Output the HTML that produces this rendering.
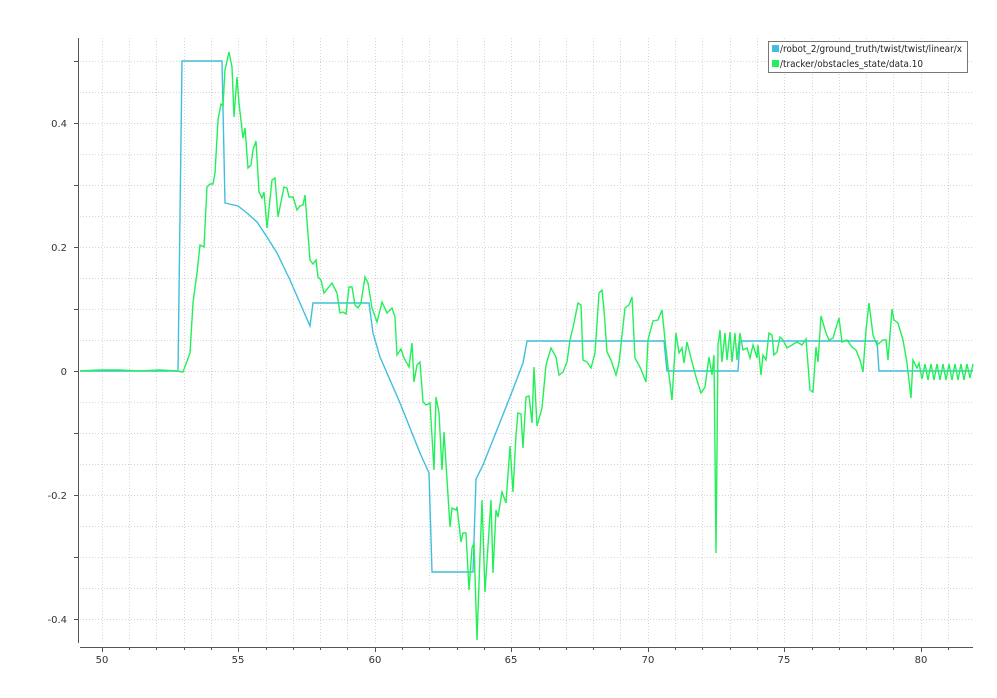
<!DOCTYPE html>
<html><head><meta charset="utf-8"><style>
html,body{margin:0;padding:0;background:#fff;width:997px;height:698px;overflow:hidden}
text{font-family:"DejaVu Sans","Liberation Sans",sans-serif;font-size:10px;fill:#333}
</style></head><body>
<svg width="997" height="698" xmlns="http://www.w3.org/2000/svg">
<g stroke="#d4d4d4" stroke-width="1" stroke-dasharray="1,2" shape-rendering="crispEdges">
<path d="M102.5 38V643M129.5 38V643M156.5 38V643M184.5 38V643M211.5 38V643M238.5 38V643M266.5 38V643M293.5 38V643M320.5 38V643M347.5 38V643M375.5 38V643M402.5 38V643M429.5 38V643M457.5 38V643M484.5 38V643M511.5 38V643M539.5 38V643M566.5 38V643M593.5 38V643M620.5 38V643M648.5 38V643M675.5 38V643M702.5 38V643M730.5 38V643M757.5 38V643M784.5 38V643M812.5 38V643M839.5 38V643M866.5 38V643M893.5 38V643M921.5 38V643M948.5 38V643"/>
<path d="M80 61.5H973M80 92.5H973M80 123.5H973M80 154.5H973M80 185.5H973M80 216.5H973M80 247.5H973M80 278.5H973M80 309.5H973M80 340.5H973M80 371.5H973M80 402.5H973M80 433.5H973M80 464.5H973M80 495.5H973M80 526.5H973M80 557.5H973M80 588.5H973M80 619.5H973"/>
</g>
<g stroke="#555" stroke-width="1.2" fill="none" shape-rendering="crispEdges">
<path d="M78.5 38V643M80 647.5H973"/>
<path d="M74 61.5H78M74 123.5H78M74 185.5H78M74 247.5H78M74 309.5H78M74 371.5H78M74 433.5H78M74 495.5H78M74 557.5H78M74 619.5H78"/>
<path d="M102.5 647V652M129.5 647V650M156.5 647V650M184.5 647V650M211.5 647V650M238.5 647V652M266.5 647V650M293.5 647V650M320.5 647V650M347.5 647V650M375.5 647V652M402.5 647V650M429.5 647V650M457.5 647V650M484.5 647V650M511.5 647V652M539.5 647V650M566.5 647V650M593.5 647V650M620.5 647V650M648.5 647V652M675.5 647V650M702.5 647V650M730.5 647V650M757.5 647V650M784.5 647V652M812.5 647V650M839.5 647V650M866.5 647V650M893.5 647V650M921.5 647V652M948.5 647V650"/>
</g>
<g text-anchor="end"><text x="67" y="127">0.4</text><text x="67" y="251">0.2</text><text x="67" y="375">0</text><text x="67" y="499">-0.2</text><text x="67" y="623">-0.4</text></g>
<g text-anchor="middle"><text x="102" y="663">50</text><text x="238" y="663">55</text><text x="375" y="663">60</text><text x="511" y="663">65</text><text x="648" y="663">70</text><text x="784" y="663">75</text><text x="921" y="663">80</text></g>
<polyline fill="none" stroke="#3fbfdc" stroke-width="1.4" points="80,371 178,371 182,61 222,61 225,203 238,206 247,213 257,222 267,237 277,253 290,280 310,326 313,303 369,303 373,333 380,357 400,403 420,453 429,473 432,572 473,572 476,479 483,465 510,397 523,363 527,341 664,341 667,371 738,371 740,341 877,341 879,371 973,371"/>
<polyline fill="none" stroke="#22f058" stroke-width="1.4" points="80,371 100,370 120,370 140,371 160,370 176,371 183,372 190,353 193,303 197,273 200,245 204,247 207,187 210,184 213,184 215,173 218,120 221,104 223,106 225,70 229,52 232,67 234,117 237,77 239,103 243,138 245,128 248,168 251,165 253,150 256,141 259,192 262,198 264,192 267,228 272,180 275,178 278,217 284,187 287,188 289,197 293,197 297,210 300,206 303,205 305,195 310,260 313,264 316,260 318,277 321,280 324,293 332,283 337,293 340,313 343,312 346,314 349,287 352,287 355,305 358,308 361,303 365,277 368,283 372,308 377,322 382,302 387,313 392,308 395,317 397,355 401,349 404,358 409,367 412,343 414,382 417,365 420,362 423,402 426,405 430,403 434,470 436,397 439,413 442,470 444,432 450,527 452,508 456,510 457,507 461,542 463,533 466,533 469,590 472,548 474,543 477,640 482,500 485,592 491,500 493,573 496,510 498,517 502,492 506,503 510,446 513,492 516,435 518,413 521,414 523,448 526,397 529,396 532,423 534,367 537,426 542,408 546,365 551,348 556,357 559,375 563,372 567,362 570,340 574,323 578,303 581,305 583,360 587,362 591,368 595,353 599,293 602,290 604,310 607,352 611,360 616,375 619,363 625,308 629,305 632,297 635,358 640,367 646,382 648,340 653,321 658,320 662,310 665,340 668,367 672,400 676,333 679,353 682,348 684,363 687,342 692,362 696,377 701,393 705,387 709,357 712,375 714,355 716,553 718,345 720,330 722,362 725,333 727,360 730,332 732,362 735,333 737,360 740,333 743,350 747,348 750,358 753,345 757,358 758,345 761,375 763,355 766,360 769,333 772,335 774,355 777,352 780,337 783,340 787,348 792,345 797,342 802,345 806,339 810,390 813,392 816,347 818,362 821,316 826,333 829,340 833,338 839,318 842,342 847,340 852,347 856,350 860,360 863,372 866,330 869,303 873,335 877,345 883,340 886,340 888,360 892,309 894,320 898,323 903,340 907,363 911,398 913,360 917,368 919,363 922,379 925,364 928,380 931,364 934,380 937,364 940,380 943,364 946,380 949,364 952,380 955,364 958,380 961,364 964,380 967,364 970,378 973,364"/>
<rect x="768.5" y="41.5" width="199" height="31" fill="#fff" stroke="#777" stroke-width="1"/>
<rect x="772" y="45" width="7" height="7" fill="#3fbfdc"/>
<rect x="772" y="60" width="7" height="7" fill="#22f058"/>
<text x="780" y="52" textLength="182" lengthAdjust="spacingAndGlyphs" style="font-size:9.5px;fill:#222">/robot_2/ground_truth/twist/twist/linear/x</text>
<text x="780" y="67" textLength="143" lengthAdjust="spacingAndGlyphs" style="font-size:9.5px;fill:#222">/tracker/obstacles_state/data.10</text>
</svg>
</body></html>
